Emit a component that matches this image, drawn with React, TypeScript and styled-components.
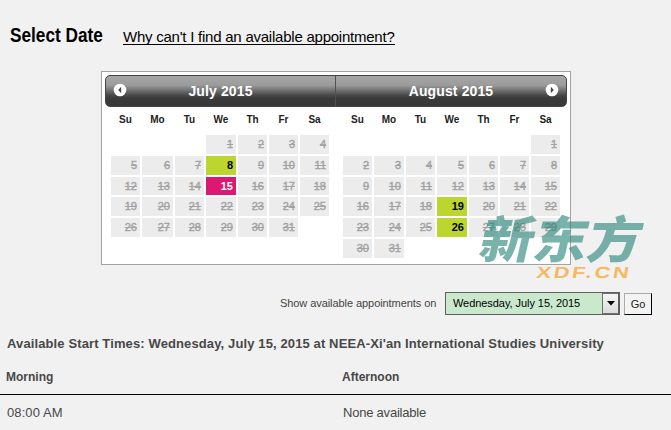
import React from "react";
import styled, { createGlobalStyle } from "styled-components";

const Global = createGlobalStyle`
  * { box-sizing: border-box; }
  body { margin: 0; background: #f1f1f1; font-family: "Liberation Sans", Arial, sans-serif; }
`;

const Page = styled.main`
  position: relative;
  width: 671px;
  height: 430px;
  overflow: hidden;
  background: #f1f1f1;
  color: #444;
`;

const TopBar = styled.header`
  display: flex;
  height: 71px;
  padding: 23px 0 0 10px;
`;

const Title = styled.h1`
  width: 113px;
  margin: 0;
  font-size: 20px;
  line-height: 24px;
  color: #000;
  white-space: nowrap;
  transform: scaleX(0.86);
  transform-origin: 0 0;
`;

const HelpLink = styled.a`
  height: 22px;
  padding-top: 5px;
  border-bottom: 1px solid #000;
  font-size: 15px;
  letter-spacing: -0.235px;
  line-height: 18px;
  color: #000;
  white-space: nowrap;
`;

const Calendar = styled.section`
  width: 470px;
  height: 194px;
  margin-left: 101px;
  padding: 3px;
  border: 1px solid #a3a3a3;
  background: #fff;
`;

const CalendarHead = styled.div`
  display: flex;
  height: 32px;
  border: 1px solid #444;
  border-radius: 5px;
  background: linear-gradient(#a6a6a6 0, #9c9c9c 30%, #808080 42%, #484848 64%, #393939 75%, #393939 100%);
`;

const MonthHead = styled.div<{ $last?: boolean }>`
  display: grid;
  grid-template-columns: 14px 1fr 14px;
  align-items: center;
  width: 230px;
  padding: 0 7px 2px;
  border-right: ${(p) => (p.$last ? "0" : "1px solid #505050")};
`;

const MonthName = styled.h2`
  grid-column: 2;
  margin: 0;
  padding-top: 2px;
  font-size: 14px;
  letter-spacing: 0.12px;
  line-height: 18px;
  color: #fff;
  text-align: center;
  white-space: nowrap;
`;

const Months = styled.div`
  display: grid;
  grid-template-columns: 218px 217px;
  column-gap: 14px;
  padding-left: 6px;
`;

const Grid = styled.div<{ $second: string }>`
  display: grid;
  grid-template-columns: 29px ${(p) => p.$second} 29px 30px 29px 29px 29px;
  grid-template-rows: 26px 19px 19px 18px 19px 19px 19px;
  gap: 2px;
`;

const Weekday = styled.span`
  padding-top: 7px;
  font-size: 10px;
  font-weight: bold;
  line-height: 12px;
  color: #222;
  text-align: center;
`;

type Kind = "off" | "open" | "picked";
const fills: Record<Kind, string> = { off: "#ececec", open: "#bdd62f", picked: "#dc1872" };
const inks: Record<Kind, string> = { off: "#a3a3a3", open: "#000", picked: "#fff" };

const Day = styled.span<{ $kind: Kind; $start?: number }>`
  grid-column-start: ${(p) => p.$start ?? "auto"};
  padding-right: 3px;
  background: ${(p) => fills[p.$kind]};
  color: ${(p) => inks[p.$kind]};
  font-size: 11px;
  font-weight: ${(p) => (p.$kind === "off" ? "normal" : "bold")};
  line-height: 18px;
  text-align: right;
  text-decoration: ${(p) => (p.$kind === "off" ? "line-through" : "none")};
  -webkit-text-stroke: ${(p) => (p.$kind === "off" ? "0.4px #a3a3a3" : "0")};
`;

const ShowRow = styled.form`
  display: flex;
  height: 23px;
  margin: 27px 0 0 280px;
`;

const ShowLabel = styled.label`
  width: 165px;
  font-size: 11px;
  letter-spacing: -0.07px;
  line-height: 22px;
  color: #444;
  white-space: nowrap;
`;

const Select = styled.div`
  display: flex;
  width: 175px;
  height: 23px;
  border: 1px solid #5f5f5f;
  border-right-width: 2px;
  background: #c9e8cc;
`;

const SelectValue = styled.span`
  flex: 1;
  padding-left: 7px;
  font-size: 11px;
  letter-spacing: -0.06px;
  line-height: 20px;
  color: #000;
  white-space: nowrap;
`;

const SelectButton = styled.span`
  display: grid;
  place-items: center;
  width: 16px;
  height: 21px;
  border: 1px solid #707070;
  border-width: 1px 0 1px 1px;
  background: linear-gradient(#f6f6f6, #dcdcdc);
`;

const GoButton = styled.button`
  width: 28px;
  height: 22px;
  margin: 1px 0 0 4px;
  padding: 0;
  border: 1px solid;
  border-color: #aaa #000 #000 #aaa;
  background: #f3f3f3;
  font: 11px/18px "Liberation Sans", Arial, sans-serif;
  color: #222;
`;

const Heading = styled.h3`
  margin: 20px 0 0 7px;
  font-size: 13px;
  letter-spacing: 0.12px;
  line-height: 18px;
  color: #484848;
  white-space: nowrap;
`;

const TimesRow = styled.div<{ $head?: boolean }>`
  display: grid;
  grid-template-columns: 336px 1fr;
  height: ${(p) => (p.$head ? "42px" : "35px")};
  padding: ${(p) => (p.$head ? "16px 0 0 6px" : "10px 0 0 7px")};
  border-bottom: ${(p) => (p.$head ? "1px solid #000" : "0")};
  font-size: ${(p) => (p.$head ? "12px" : "13px")};
  font-weight: ${(p) => (p.$head ? "bold" : "normal")};
  line-height: 16px;
  color: #484848;
`;

const Availability = styled.span<{ $tight?: boolean }>`
  letter-spacing: ${(p) => (p.$tight ? "-0.22px" : "0.1px")};
`;

const Watermark = styled.div`
  position: absolute;
  left: 482px;
  top: 209px;
  width: 170px;
  height: 74px;
  color: rgba(38, 132, 119, 0.62);
`;

const Brand = styled.div`
  height: 54px;
  width: 150px;
  font: 900 50px/54px "Noto Sans CJK SC", sans-serif;
  white-space: nowrap;
  transform: scaleX(1.075) skewX(-12deg);
  transform-origin: 0 50%;
`;

const Domain = styled.div`
  position: absolute;
  left: 56px;
  top: 55px;
  font: bold 16px/18px "Liberation Sans", Arial, sans-serif;
  letter-spacing: 2px;
  color: #f5b964;
  white-space: nowrap;
  transform: scaleX(1.36) skewX(-7deg);
  transform-origin: 0 0;
`;

const Arrow = ({ next }: { next?: boolean }) => (
  <svg width="14" height="14" viewBox="0 0 14 14">
    <circle cx="7" cy="7" r="6.3" fill="#fff" />
    <path d={next ? "M5.8 3.8 8.8 7 5.8 10.2z" : "M8.2 3.8 5.2 7 8.2 10.2z"} fill="#444" />
  </svg>
);

const weekdays = ["Su", "Mo", "Tu", "We", "Th", "Fr", "Sa"];

type MonthProps = { days: number; start: number; open: number[]; picked?: number; second: string };

const Month = ({ days, start, open, picked, second }: MonthProps) => (
  <Grid $second={second}>
    {weekdays.map((d) => (
      <Weekday key={d}>{d}</Weekday>
    ))}
    {Array.from({ length: days }, (_, i) => i + 1).map((n) => (
      <Day
        key={n}
        $start={n === 1 ? start : undefined}
        $kind={n === picked ? "picked" : open.includes(n) ? "open" : "off"}
      >
        {n}
      </Day>
    ))}
  </Grid>
);

export default function App() {
  return (
    <Page>
      <Global />
      <TopBar>
        <Title>Select Date</Title>
        <HelpLink>Why can't I find an available appointment?</HelpLink>
      </TopBar>
      <Calendar>
        <CalendarHead>
          <MonthHead>
            <Arrow />
            <MonthName>July 2015</MonthName>
          </MonthHead>
          <MonthHead $last>
            <MonthName>August 2015</MonthName>
            <Arrow next />
          </MonthHead>
        </CalendarHead>
        <Months>
          <Month days={31} start={4} open={[8]} picked={15} second="31px" />
          <Month days={31} start={7} open={[19, 26]} second="30px" />
        </Months>
      </Calendar>
      <ShowRow>
        <ShowLabel>Show available appointments on</ShowLabel>
        <Select>
          <SelectValue>Wednesday, July 15, 2015</SelectValue>
          <SelectButton>
            <svg width="8" height="5" viewBox="0 0 8 5">
              <path d="M0 0h8L4 4.5z" fill="#000" />
            </svg>
          </SelectButton>
        </Select>
        <GoButton type="button">Go</GoButton>
      </ShowRow>
      <Heading>Available Start Times: Wednesday, July 15, 2015 at NEEA-Xi'an International Studies University</Heading>
      <TimesRow $head>
        <span>Morning</span>
        <span>Afternoon</span>
      </TimesRow>
      <TimesRow>
        <Availability>08:00 AM</Availability>
        <Availability $tight>None available</Availability>
      </TimesRow>
      <Watermark>
        <Brand>新东方</Brand>
        <Domain>XDF.CN</Domain>
      </Watermark>
    </Page>
  );
}
